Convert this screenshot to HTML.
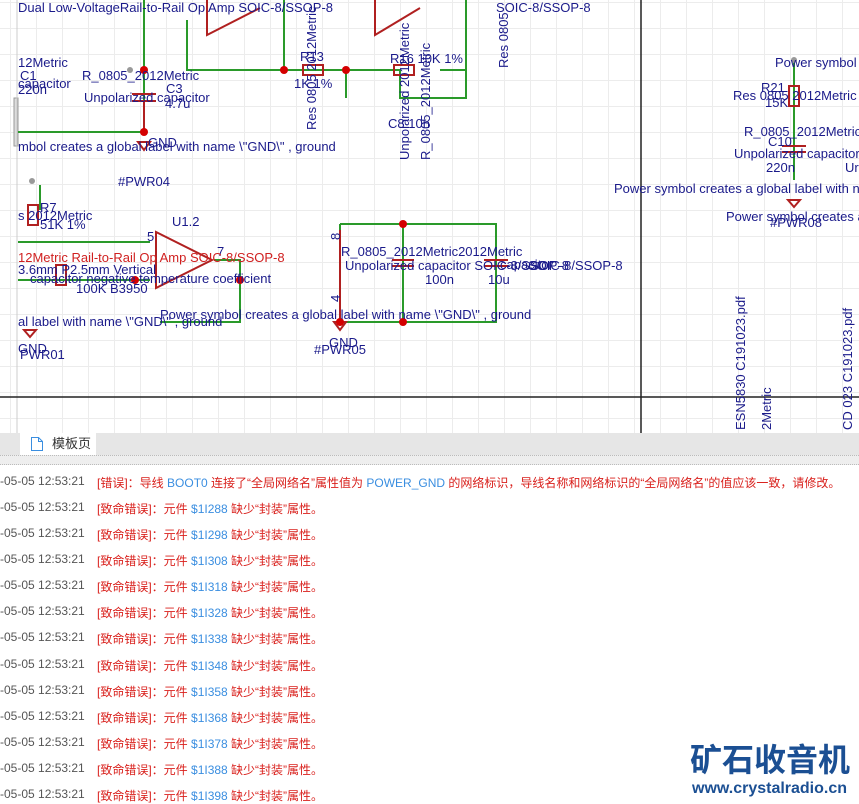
<!DOCTYPE html>
<html><head><meta charset="utf-8"><style>
body{margin:0;width:859px;height:802px;overflow:hidden;background:#fff;font-family:"Liberation Sans","Noto Sans CJK SC",sans-serif;position:relative}
#sch{position:absolute;left:0;top:0;width:859px;height:433px;background:#fff;
background-image:linear-gradient(#ececec 1px,transparent 1px),linear-gradient(90deg,#ececec 1px,transparent 1px);background-size:26px 26px;background-position:10px 2px}
#tabs{position:absolute;left:0;top:433px;width:859px;height:22px;background:#e6e6e6}
#tab{position:absolute;left:20px;top:0;width:76px;height:22px;background:#fff;font-size:13px;color:#333;line-height:22px}
#div{position:absolute;left:0;top:455px;width:859px;height:8px;background:#eee;border-top:1px dotted #bbb;border-bottom:1px dotted #bbb}
.l{position:absolute;left:0;font-size:12px;color:#555;white-space:nowrap}
.l .m{position:absolute;left:97px;color:#d9201c}
.b{color:#3a8ee0}
#logo{position:absolute;left:690px;top:738px;font-size:32px;line-height:40px;font-weight:bold;color:#1b4f93;white-space:nowrap;font-family:"Noto Sans CJK SC",sans-serif}
#url{position:absolute;left:692px;top:780px;font-size:16px;font-weight:bold;color:#1b4f93;white-space:nowrap}
</style></head><body>
<div id="sch">
<svg width="859" height="433" style="position:absolute;left:0;top:0" font-family="Liberation Sans, sans-serif" font-size="13" fill="#1a1a8a">
<rect x="14" y="98" width="4" height="48" fill="#ddd" stroke="#999"/>
<line x1="17" y1="0" x2="17" y2="433" stroke="#ccc"/>
<line x1="0" y1="397" x2="859" y2="397" stroke="#222" stroke-width="1.5"/>
<line x1="641" y1="0" x2="641" y2="433" stroke="#222" stroke-width="1.5"/>
<g stroke="#2a9a2a" stroke-width="2" fill="none">
<path d="M144 0V132M18 132H144M187 20V70H284V0M284 70H400V98H466V0M346 70V98M466 70H440"/>
<path d="M340 224H496V322H340V224M403 224V322"/>
<path d="M18 242H150M18 280H150M214 260H240V322H160"/>
<path d="M794 60V180"/>
<path d="M40 185V210"/>
</g>
<g stroke="#b02020" stroke-width="2" fill="none">
<path d="M207 0L207 35L260 8M375 0V35L420 8"/>
<path d="M156 232V288L212 260Z"/>
<path d="M132 94H156M132 101H156M144 101V132"/>
<rect x="303" y="65" width="20" height="10"/><rect x="394" y="65" width="20" height="10"/>
<rect x="789" y="86" width="10" height="20"/><path d="M782 146H806M782 152H806"/>
<rect x="28" y="205" width="10" height="20"/><rect x="56" y="265" width="10" height="20"/>
<path d="M138 142L150 142L144 150Z"/><path d="M334 322L346 322L340 330Z"/><path d="M788 200L800 200L794 207Z"/><path d="M24 330L36 330L30 337Z"/>
<path d="M392 260H414M392 266H414M484 260H508M484 266H508M340 230V318"/>
</g>
<g fill="#d40000">
<circle cx="144" cy="70" r="4"/><circle cx="144" cy="132" r="4"/><circle cx="284" cy="70" r="4"/><circle cx="346" cy="70" r="4"/>
<circle cx="403" cy="224" r="4"/><circle cx="340" cy="322" r="4"/><circle cx="403" cy="322" r="4"/><circle cx="240" cy="280" r="4"/><circle cx="135" cy="280" r="4"/>
</g>
<circle cx="794" cy="60" r="3" fill="#999"/><circle cx="130" cy="70" r="3" fill="#999"/><circle cx="32" cy="181" r="3" fill="#999"/>
<text x="18" y="12">Dual Low-VoltageRail-to-Rail Op Amp SOIC-8/SSOP-8</text>
<text x="496" y="12">SOIC-8/SSOP-8</text>
<text x="18" y="67">12Metric</text><text x="20" y="80">C1</text><text x="18" y="88">capacitor</text><text x="18" y="94">220n</text>
<text x="82" y="80">R_0805_2012Metric</text><text x="166" y="93">C3</text>
<text x="84" y="102">Unpolarized capacitor</text><text x="165" y="108">4.7u</text>
<text x="300" y="61">R13</text><text x="294" y="88">1K 1%</text><text x="390" y="63">R16 10K 1%</text>
<text x="388" y="128">C8 10n</text>
<text x="18" y="151">mbol creates a global label with name \"GND\" , ground</text>
<text x="148" y="147">GND</text><text x="118" y="186">#PWR04</text>
<text x="40" y="212">R7</text><text x="18" y="220">s 2012Metric</text><text x="40" y="229">51K 1%</text>
<text x="172" y="226">U1.2</text><text x="147" y="241">5</text><text x="217" y="256">7</text>
<text x="18" y="262" fill="#d02020">12Metric Rail-to-Rail Op Amp SOIC-8/SSOP-8</text>
<text x="18" y="274">3.6mm P2.5mm Vertical</text><text x="30" y="283">capacitor negative temperature coefficient</text>
<text x="76" y="293">100K B3950</text>
<text x="18" y="326">al label with name \"GND\" , ground</text><text x="160" y="319">Power symbol creates a global label with name \"GND\" , ground</text>
<text x="18" y="353">GND</text><text x="20" y="359">PWR01</text>
<text x="341" y="256">R_0805_2012Metric2012Metric</text>
<text x="345" y="270">Unpolarized capacitor SOIC-8/SSOP-8</text><text x="425" y="284">100n</text><text x="488" y="284">10u</text>
<text x="500" y="269">capacitor</text><text x="528" y="270">SOIC-8/SSOP-8</text>
<text x="329" y="347">GND</text><text x="314" y="354">#PWR05</text>
<text x="775" y="67">Power symbol</text><text x="761" y="92">R21</text><text x="733" y="100">Res 0805 2012Metric</text><text x="765" y="107">15K</text>
<text x="744" y="136">R_0805_2012Metric</text><text x="768" y="146">C10</text><text x="734" y="158">Unpolarized capacitor</text><text x="766" y="172">220n</text><text x="845" y="172">Ur</text>
<text x="614" y="193">Power symbol creates a global label with na</text>
<text x="726" y="221">Power symbol creates a</text><text x="770" y="227">#PWR08</text>
<g transform="translate(745,430) rotate(-90)"><text>ESN5830 C191023.pdf</text></g>
<g transform="translate(771,430) rotate(-90)"><text>2Metric</text></g>
<g transform="translate(852,430) rotate(-90)"><text>CD 023 C191023.pdf</text></g>
<g transform="translate(316,130) rotate(-90)"><text>Res 0805 2012Metric</text></g>
<g transform="translate(409,160) rotate(-90)"><text>Unpolarized 2012Metric</text></g>
<g transform="translate(430,160) rotate(-90)"><text>R_0805_2012Metric</text></g>
<g transform="translate(508,68) rotate(-90)"><text>Res 0805</text></g>
<g transform="translate(340,240) rotate(-90)"><text>8</text></g><g transform="translate(340,302) rotate(-90)"><text>4</text></g>
</svg>
</div>
<div id="tabs"><div id="tab"><svg width="14" height="16" style="position:absolute;left:10px;top:3px"><path d="M1.5 1.5H8.5L12.5 5.5V14.5H1.5Z M8.5 1.5V5.5H12.5" fill="none" stroke="#3a8ee0"/></svg><span style="position:absolute;left:32px">模板页</span></div></div>
<div id="div"></div>
<div class="l" style="top:474px">-05-05 12:53:21<span class="m">[错误]：导线 <span class="b">BOOT0</span> 连接了“全局网络名”属性值为 <span class="b">POWER_GND</span> 的网络标识，导线名称和网络标识的“全局网络名”的值应该一致，请修改。</span></div>
<div class="l" style="top:500px">-05-05 12:53:21<span class="m">[致命错误]：元件 <span class="b">$1I288</span> 缺少“封装”属性。</span></div>
<div class="l" style="top:526px">-05-05 12:53:21<span class="m">[致命错误]：元件 <span class="b">$1I298</span> 缺少“封装”属性。</span></div>
<div class="l" style="top:552px">-05-05 12:53:21<span class="m">[致命错误]：元件 <span class="b">$1I308</span> 缺少“封装”属性。</span></div>
<div class="l" style="top:578px">-05-05 12:53:21<span class="m">[致命错误]：元件 <span class="b">$1I318</span> 缺少“封装”属性。</span></div>
<div class="l" style="top:604px">-05-05 12:53:21<span class="m">[致命错误]：元件 <span class="b">$1I328</span> 缺少“封装”属性。</span></div>
<div class="l" style="top:630px">-05-05 12:53:21<span class="m">[致命错误]：元件 <span class="b">$1I338</span> 缺少“封装”属性。</span></div>
<div class="l" style="top:657px">-05-05 12:53:21<span class="m">[致命错误]：元件 <span class="b">$1I348</span> 缺少“封装”属性。</span></div>
<div class="l" style="top:683px">-05-05 12:53:21<span class="m">[致命错误]：元件 <span class="b">$1I358</span> 缺少“封装”属性。</span></div>
<div class="l" style="top:709px">-05-05 12:53:21<span class="m">[致命错误]：元件 <span class="b">$1I368</span> 缺少“封装”属性。</span></div>
<div class="l" style="top:735px">-05-05 12:53:21<span class="m">[致命错误]：元件 <span class="b">$1I378</span> 缺少“封装”属性。</span></div>
<div class="l" style="top:761px">-05-05 12:53:21<span class="m">[致命错误]：元件 <span class="b">$1I388</span> 缺少“封装”属性。</span></div>
<div class="l" style="top:787px">-05-05 12:53:21<span class="m">[致命错误]：元件 <span class="b">$1I398</span> 缺少“封装”属性。</span></div>
<div id="logo">矿石收音机</div>
<div id="url">www.crystalradio.cn</div>
</body></html>
